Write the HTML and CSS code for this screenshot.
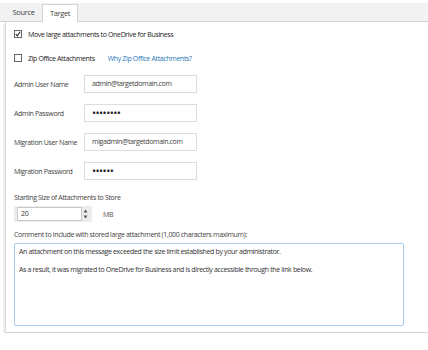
FILE: index.html
```html
<!DOCTYPE html>
<html lang="en">
<head>
    <meta charset="UTF-8">
    <title>Target Settings</title>
    <link rel="stylesheet" href="styles.css">
</head>
<body>
    <div class="tabs">
        <div class="tab">Source</div>
        <div class="tab active">Target</div>
    </div>
    <div class="panel">
        <label class="check-row">
            <span class="box checked">
                <svg width="8" height="8" viewBox="0 0 8 8"><path d="M1 4 L3 6.5 L7 1" fill="none" stroke="#222" stroke-width="1.4"/></svg>
            </span>
            Move large attachments to OneDrive for Business
        </label>
        <div class="check-row zip">
            <span class="box"></span>
            Zip Office Attachments
            <a class="link" href="#">Why Zip Office Attachments?</a>
        </div>

        <div class="fields">
            <div class="field">
                <span class="field-label">Admin User Name</span>
                <div class="text-input">admin@targetdomain.com</div>
            </div>
            <div class="field">
                <span class="field-label">Admin Password</span>
                <div class="text-input dots">••••••••</div>
            </div>
            <div class="field">
                <span class="field-label">Migration User Name</span>
                <div class="text-input">migadmin@targetdomain.com</div>
            </div>
            <div class="field">
                <span class="field-label">Migration Password</span>
                <div class="text-input dots">••••••</div>
            </div>
        </div>

        <div class="size-label">Starting Size of Attachments to Store</div>
        <div class="size-row">
            <div class="spinner">
                <div class="spin-value">20</div>
                <div class="spin-arrows">
                    <svg width="5" height="10" viewBox="0 0 5 10"><path d="M2.5 0.5 L4.5 3.5 L0.5 3.5 Z M2.5 9.5 L4.5 6.5 L0.5 6.5 Z" fill="#555"/></svg>
                </div>
            </div>
            <span class="unit">MB</span>
        </div>

        <div class="comment-label">Comment to include with stored large attachment (1,000 characters maximum):</div>
        <div class="comment-box">
            <p>An attachment on this message exceeded the size limit established by your administrator.</p>
            <p>As a result, it was migrated to OneDrive for Business and is directly accessible through the link below.</p>
        </div>
    </div>
</body>
</html>
```

FILE: styles.css
```css
body {
    margin: 0;
    background: #fff;
    font-family: "Open Sans", sans-serif;
    font-size: 7px;
    letter-spacing: -0.35px;
    color: #333;
}
.tabs {
    display: flex;
    align-items: flex-end;
    height: 18px;
    margin-top: 3px;
    padding-left: 5px;
    background: #f2f2f2;
    border-bottom: 1px solid #cdd1d9;
}
.tab {
    width: 37px;
    height: 17px;
    line-height: 17px;
    text-align: center;
    font-size: 7.5px;
    color: #444;
}
.active {
    width: 34px;
    height: 17px;
    margin-bottom: -1px;
    background: #fff;
    border: 1px solid #cdd1d9;
    border-bottom: none;
}
.panel {
    margin-left: 5px;
    height: 311px;
    box-sizing: border-box;
    padding: 7px 0 0 8px;
    border-left: 1px solid #d4d7dc;
    border-bottom: 1px solid #cdd1d9;
    box-shadow: -2px 2px 0 #f0f0f0;
}
.check-row {
    display: flex;
    align-items: center;
    height: 10px;
    gap: 6px;
    color: #222;
}
.zip {
    margin-top: 14px;
}
.box {
    display: flex;
    align-items: center;
    justify-content: center;
    width: 6px;
    height: 6px;
    border: 1px solid #666;
    background: #fff;
}
.link {
    margin-left: 7px;
    color: #2a7ab8;
    text-decoration: none;
}
.fields {
    display: flex;
    flex-direction: column;
    gap: 11px;
    margin-top: 12px;
}
.field {
    display: flex;
    align-items: center;
}
.field-label {
    width: 70px;
    white-space: nowrap;
    color: #444;
}
.text-input {
    width: 104px;
    height: 16px;
    line-height: 16px;
    padding-left: 7px;
    border: 1px solid #dcdcdc;
    color: #444;
}
.dots {
    font-size: 11px;
    letter-spacing: -0.6px;
    color: #222;
}
.size-label {
    margin-top: 13px;
    color: #444;
}
.size-row {
    display: flex;
    align-items: center;
    margin-top: 4px;
}
.spinner {
    display: flex;
    align-items: center;
    width: 72px;
    height: 16px;
    padding: 0 3px;
    background: #ececec;
}
.spin-value {
    width: 60px;
    height: 12px;
    line-height: 12px;
    padding-left: 3px;
    border: 1px solid #c8c8c8;
    background: #fff;
}
.spin-arrows {
    display: flex;
    justify-content: center;
    flex: 1;
}
.unit {
    margin-left: 11px;
    color: #555;
}
.comment-label {
    margin-top: 8px;
    color: #444;
}
.comment-box {
    width: 384px;
    height: 78px;
    margin-top: 4px;
    padding: 3px 0 0 4px;
    border: 1px solid #a8cdee;
    border-radius: 2px;
    box-shadow: 0 0 1px #cfe3f5;
    color: #333;
}
.comment-box p {
    margin: 0 0 8px;
    line-height: 10px;
}
```
